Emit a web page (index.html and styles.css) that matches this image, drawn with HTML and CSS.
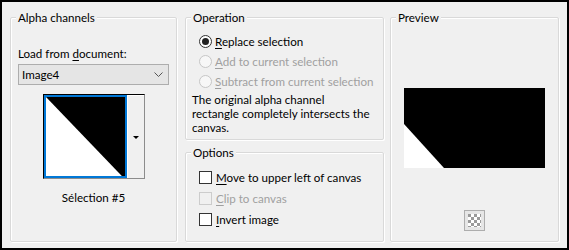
FILE: index.html
```html
<!DOCTYPE html>
<html lang="en">
  <head>
    <meta charset="UTF-8" />
    <title>Alpha channels</title>
    <link rel="stylesheet" href="styles.css">
  </head>
  <body>
    <div class="dialog">
      <fieldset class="group group-alpha">
        <legend>Alpha channels</legend>
        <div class="field-label">Load from <u>d</u>ocument:</div>
        <div class="combo">
          <span>Image4</span>
          <svg class="combo-chevron" width="9" height="5" viewBox="0 0 9 5"><path d="M0.5 0.5 L4.5 4.5 L8.5 0.5" fill="none" stroke="#555" stroke-width="1"/></svg>
        </div>
        <div class="thumb">
          <div class="thumb-image">
            <svg width="79" height="79" viewBox="0 0 100 100" preserveAspectRatio="none">
              <rect width="100" height="100" fill="#000"/>
              <polygon points="0,0 0,100 96,100" fill="#fff"/>
            </svg>
          </div>
          <div class="thumb-drop"><span class="drop-arrow"></span></div>
        </div>
        <div class="thumb-caption">Sélection #5</div>
      </fieldset>

      <div class="column">
        <fieldset class="group group-operation">
          <legend>Operation</legend>
          <div class="option"><span class="radio checked"></span><span><u>R</u>eplace selection</span></div>
          <div class="option disabled"><span class="radio"></span><span><u>A</u>dd to current selection</span></div>
          <div class="option disabled"><span class="radio"></span><span><u>S</u>ubtract from current selection</span></div>
          <p class="description">The original alpha channel<br>rectangle completely intersects the<br>canvas.</p>
        </fieldset>
        <fieldset class="group group-options">
          <legend>Options</legend>
          <div class="option check-row"><span class="checkbox"></span><span><u>M</u>ove to upper left of canvas</span></div>
          <div class="option check-row disabled"><span class="checkbox"></span><span><u>C</u>lip to canvas</span></div>
          <div class="option check-row"><span class="checkbox"></span><span><u>I</u>nvert image</span></div>
        </fieldset>
      </div>

      <fieldset class="group group-preview">
        <legend>Preview</legend>
        <div class="preview-image">
          <svg width="141" height="80" viewBox="0 0 141 80">
            <rect width="141" height="80" fill="#000"/>
            <polygon points="0,36 0,80 40,80" fill="#fff"/>
          </svg>
        </div>
        <div class="checker">
          <svg width="21" height="21" viewBox="0 0 21 21">
            <defs>
              <pattern id="chk" width="6" height="6" patternUnits="userSpaceOnUse" x="4" y="4">
                <rect width="6" height="6" fill="#fff"/>
                <rect width="3" height="3" fill="#9a9a9a"/>
                <rect x="3" y="3" width="3" height="3" fill="#9a9a9a"/>
              </pattern>
            </defs>
            <rect x="0.5" y="0.5" width="20" height="20" fill="#e6e6e6" stroke="#adadad"/>
            <rect x="4" y="4" width="13" height="13" fill="url(#chk)"/>
          </svg>
        </div>
      </fieldset>
    </div>
  </body>
</html>
```

FILE: styles.css
```css
body {
  margin: 0;
  background: #f0f0f0;
}

.dialog {
  width: 569px;
  height: 250px;
  box-sizing: border-box;
  border: 2px solid #000;
  background: #f0f0f0;
  padding: 8px 8px 0 8px;
  display: flex;
  align-items: flex-start;
  font-family: Lato, "Noto Sans", sans-serif;
  font-size: 11.6px;
  line-height: 15px;
  color: #000;
}

u {
  text-decoration: underline;
  text-underline-offset: 2px;
}

.group {
  margin: 0;
  padding: 0 7px;
  min-width: 0;
  box-sizing: border-box;
  border: 1px solid #d9d9d9;
  border-radius: 2px;
  box-shadow: inset 1px 1px 0 #fff, 1px 1px 0 #fff;
}

.group legend {
  padding: 0 2px;
  margin-left: -2px;
  background: #f0f0f0;
}

.group-alpha {
  width: 167px;
  height: 232px;
  margin-right: 8px;
  display: flex;
  flex-direction: column;
}

.column {
  width: 199px;
  display: flex;
  flex-direction: column;
  gap: 5px;
  margin-right: 6px;
}

.group-operation {
  height: 130px;
  padding-top: 6px;
}

.group-options {
  height: 97px;
  padding-top: 7px;
}

.group-preview {
  width: 169px;
  height: 232px;
  display: flex;
  flex-direction: column;
  align-items: center;
}

/* alpha channels */

.field-label {
  margin-top: 21px;
}

.combo {
  margin-top: 3px;
  height: 21px;
  box-sizing: border-box;
  border: 1px solid #adadad;
  background: #e5e5e5;
  display: flex;
  align-items: center;
  justify-content: space-between;
  padding: 0 5px 0 3px;
}

.thumb {
  align-self: center;
  margin-top: 9px;
  width: 102px;
  height: 85px;
  box-sizing: border-box;
  display: flex;
  border-top: 1px solid #000;
  border-left: 1px solid #000;
  border-right: 1px solid #8c8c8c;
  border-bottom: 1px solid #8c8c8c;
}

.thumb-image {
  width: 83px;
  height: 83px;
  flex-shrink: 0;
  box-sizing: border-box;
  border: 2px solid #0078d7;
  background: #fff;
  display: flex;
}

.thumb-drop {
  flex: 1;
  border-left: 1px solid #fff;
  border-top: 1px solid #fff;
  background: #f0f0f0;
  display: flex;
  align-items: center;
  justify-content: center;
}

.drop-arrow {
  width: 0;
  height: 0;
  border-left: 3px solid transparent;
  border-right: 3px solid transparent;
  border-top: 3px solid #000;
}

.thumb-caption {
  align-self: center;
  margin-top: 11px;
}

/* operation and options */

.option {
  display: flex;
  align-items: center;
  height: 20px;
  gap: 3px;
  padding-left: 6px;
  white-space: nowrap;
}

.check-row {
  height: 21px;
  gap: 4px;
}

.option.disabled {
  color: #a0a0a0;
}

.radio {
  flex-shrink: 0;
  width: 13px;
  height: 13px;
  box-sizing: border-box;
  border: 1px solid #333;
  border-radius: 50%;
  background: #fff;
  display: flex;
  align-items: center;
  justify-content: center;
}

.radio.checked::after {
  content: '';
  width: 7px;
  height: 7px;
  border-radius: 50%;
  background: #222;
}

.disabled .radio {
  border-color: #c6c6c6;
  background: #f7f7f7;
}

.checkbox {
  flex-shrink: 0;
  width: 13px;
  height: 13px;
  box-sizing: border-box;
  border: 1px solid #333;
  background: #fff;
}

.disabled .checkbox {
  border-color: #cccccc;
  background: #f0f0f0;
}

.description {
  margin: 2px 0 0 -1px;
  line-height: 14px;
  white-space: nowrap;
}

/* preview */

.preview-image {
  margin-top: 63px;
  display: flex;
}

.checker {
  margin-top: 42px;
  display: flex;
}
```
